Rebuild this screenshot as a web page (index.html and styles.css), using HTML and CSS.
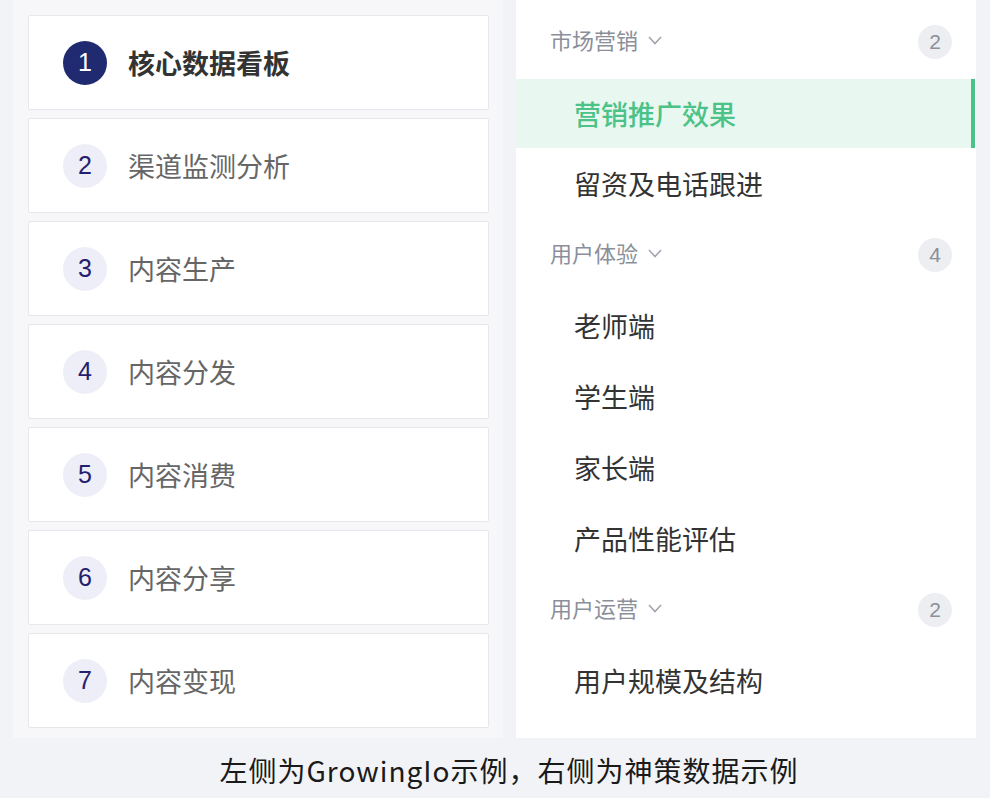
FILE: index.html
```html
<!DOCTYPE html>
<html lang="zh">
<head>
<meta charset="utf-8">
<link rel="stylesheet" href="styles.css">
</head>
<body>
<div class="main">
  <div class="left">
    <div class="card active"><span class="num">1</span><span class="label">核心数据看板</span></div>
    <div class="card"><span class="num">2</span><span class="label">渠道监测分析</span></div>
    <div class="card"><span class="num">3</span><span class="label">内容生产</span></div>
    <div class="card"><span class="num">4</span><span class="label">内容分发</span></div>
    <div class="card"><span class="num">5</span><span class="label">内容消费</span></div>
    <div class="card"><span class="num">6</span><span class="label">内容分享</span></div>
    <div class="card"><span class="num">7</span><span class="label">内容变现</span></div>
  </div>
  <div class="right">
    <div class="group first"><span class="gtitle">市场营销</span><svg class="chev" viewBox="0 0 14 9" width="14" height="9"><polyline points="1,1 7,7.5 13,1" fill="none" stroke="#a0a5b0" stroke-width="1.6"/></svg><span class="badge">2</span></div>
    <div class="item selected">营销推广效果</div>
    <div class="item">留资及电话跟进</div>
    <div class="group"><span class="gtitle">用户体验</span><svg class="chev" viewBox="0 0 14 9" width="14" height="9"><polyline points="1,1 7,7.5 13,1" fill="none" stroke="#a0a5b0" stroke-width="1.6"/></svg><span class="badge">4</span></div>
    <div class="item">老师端</div>
    <div class="item">学生端</div>
    <div class="item">家长端</div>
    <div class="item">产品性能评估</div>
    <div class="group"><span class="gtitle">用户运营</span><svg class="chev" viewBox="0 0 14 9" width="14" height="9"><polyline points="1,1 7,7.5 13,1" fill="none" stroke="#a0a5b0" stroke-width="1.6"/></svg><span class="badge">2</span></div>
    <div class="item">用户规模及结构</div>
  </div>
</div>
<div class="caption">左侧为GrowingIo示例，右侧为神策数据示例</div>
</body>
</html>
```

FILE: styles.css
```css
html, body {
  margin: 0;
  padding: 0;
}
body {
  background: #f2f3f6;
  font-family: "Noto Sans CJK SC", "Noto Sans", sans-serif;
  width: 990px;
  height: 798px;
  overflow: hidden;
}
.main {
  display: flex;
  height: 738px;
}
.left {
  margin-left: 13px;
  width: 490px;
  box-sizing: border-box;
  padding: 15px 0 0 15px;
  background: #f7f7f9;
  display: flex;
  flex-direction: column;
  gap: 8px;
}
.card {
  width: 461px;
  height: 95px;
  box-sizing: border-box;
  background: #ffffff;
  border: 1px solid #e6e7eb;
  border-radius: 2px;
  display: flex;
  align-items: center;
  padding-left: 34px;
}
.num {
  width: 44px;
  height: 44px;
  border-radius: 50%;
  background: #eeeef8;
  color: #24206e;
  font-family: "Liberation Sans", Arial, sans-serif;
  font-size: 25px;
  display: flex;
  align-items: center;
  justify-content: center;
  flex-shrink: 0;
}
.card.active .num {
  background: #1f2a70;
  color: #ffffff;
}
.label {
  margin-left: 21px;
  font-size: 27px;
  line-height: 36px;
  color: #666666;
}
.card.active .label {
  color: #333333;
  font-weight: bold;
}
.right {
  margin-left: 13px;
  width: 460px;
  background: #ffffff;
  padding-top: 4px;
  box-sizing: border-box;
}
.group {
  height: 71px;
  display: flex;
  align-items: center;
  padding-left: 34px;
  padding-right: 24px;
}
.group.first {
  height: 75px;
}
.gtitle {
  font-size: 22px;
  color: #8a8f9a;
  line-height: 30px;
  margin-top: -5px;
}
.chev {
  margin-left: 10px;
  margin-top: -3px;
}
.badge {
  margin-left: auto;
  width: 34px;
  height: 34px;
  border-radius: 50%;
  background: #eceef2;
  color: #8a8f99;
  font-family: "Liberation Sans", Arial, sans-serif;
  font-size: 21px;
  display: flex;
  align-items: center;
  justify-content: center;
}
.item {
  height: 71px;
  display: flex;
  align-items: center;
  padding-left: 58px;
  font-size: 27px;
  color: #333333;
}
.item.selected {
  height: 69px;
  background: #e8f8f0;
  color: #4bc287;
  box-sizing: border-box;
  border-right: 4px solid #4bc287;
  font-weight: 500;
  margin-right: 1px;
}
.caption {
  height: 60px;
  box-sizing: border-box;
  padding-top: 5px;
  padding-left: 28px;
  line-height: 55px;
  text-align: center;
  font-size: 28px;
  letter-spacing: 1px;
  color: #1a1a1a;
}
```
